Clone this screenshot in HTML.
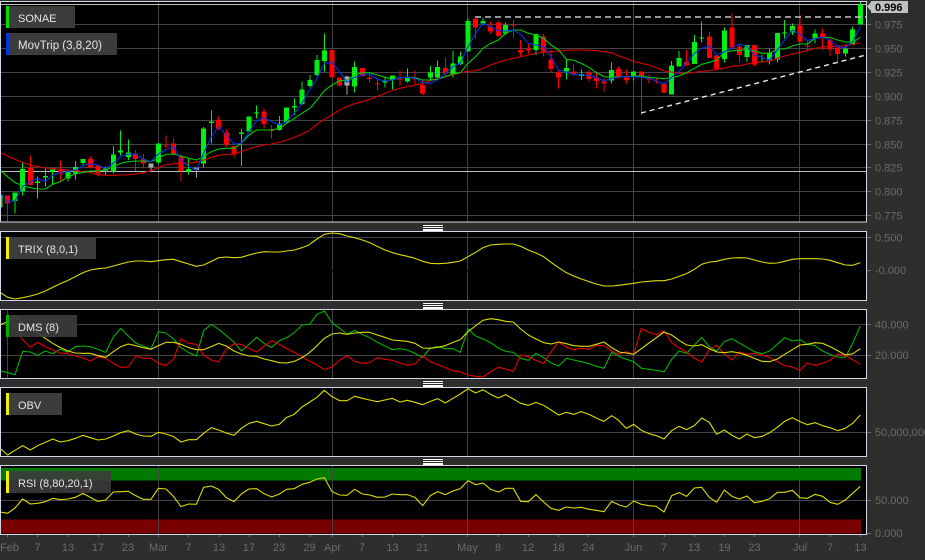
<!DOCTYPE html>
<html><head><meta charset="utf-8"><style>
html,body{margin:0;padding:0;background:#2e2e2e;width:925px;height:560px;overflow:hidden}
svg{display:block;position:absolute;left:0;top:0}
text{font-family:"Liberation Sans",sans-serif}
.ax{font-size:11px;fill:#6a6a6a}
.lb{font-size:11px;fill:#e4e4e4}
.gr{stroke:#444;stroke-width:1;fill:none;shape-rendering:crispEdges}
.w{fill:none;stroke-width:3;shape-rendering:crispEdges}
.b{fill:none;stroke-width:15;shape-rendering:crispEdges}
.l{fill:none;stroke-width:3.3;stroke-linejoin:round}
</style></head><body>
<svg width="925" height="560" viewBox="0 0 925 560">
<rect width="925" height="560" fill="#2e2e2e"/>
<!-- panels -->
<rect x="0" y="1" width="866" height="221" fill="#000"/>
<rect x="0" y="232" width="866" height="68" fill="#000"/>
<rect x="0" y="310" width="866" height="68" fill="#000"/>
<rect x="0" y="388" width="866" height="68" fill="#000"/>
<rect x="0" y="466" width="866" height="68" fill="#000"/>
<!-- RSI bands -->
<rect x="1" y="468" width="860" height="12.5" fill="#007a00"/>
<rect x="1" y="519.5" width="860" height="14" fill="#7a0000"/>
<!-- grid -->
<path class="gr" d="M0 24.5H866M0 48.5H866M0 72.5H866M0 96.5H866M0 120.5H866M0 144.5H866M0 167.5H866M0 191.5H866M0 215.5H866M0 237.5H866M0 324.5H866M0 355.5H866M0 432.5H866M0 500.5H866"/>
<path class="gr" d="M158.5 1V222M332.5 1V222M467.5 1V222M633.5 1V222M799.5 1V222M158.5 232V300M332.5 232V300M467.5 232V300M633.5 232V300M799.5 232V300M7.5 310V378M158.5 310V378M332.5 310V378M467.5 310V378M633.5 310V378M799.5 310V378M158.5 388V456M332.5 388V456M467.5 388V456M633.5 388V456M799.5 388V456M158.5 466V534M332.5 466V534M467.5 466V534M633.5 466V534M799.5 466V534"/>
<rect x="0" y="270" width="866" height="1.5" fill="#000"/>
<path d="M0 4.5H866M0 171.5H866" stroke="#bdbdbd" stroke-width="1" fill="none" shape-rendering="crispEdges"/>
<!-- candles 1 -->
<g transform="scale(.33333)">
<path class="w" stroke="#00ee11" d="M45 577V640M68 485V587M113 530V596M136 503V560M158 509V553M204 510V545M226 483V538M249 477V495M317 500V525M340 438V520M362 391V467M385 418V480M475 430V490M566 475V523M611 381V503M634 331V430M724 385V498M747 349V397M770 316V355M838 348V392M860 323V370M883 295V345M906 245V315"/>
<path class="b" stroke="#00ee11" d="M0 585V623M45 577V603M68 507V575M113 545V549M136 528V532M158 509V514M204 514V535M226 501V521M249 477V489M317 506V512M340 463V515M362 452V458M385 457V471M475 430V488M566 507V514M611 385V490M634 365V369M724 398V402M747 349V395M770 337V341M838 370V390M860 323V367M883 318V322M906 269V312"/>
<path class="w" stroke="#f00" d="M23 587V665M91 466V555M181 481V545M271 469V505M294 496V530M407 450V513M430 462V505M498 407V445M521 415V465M543 465V545M656 349V390M679 389V440M702 438V472M792 325V385M815 375V415"/>
<path class="b" stroke="#f00" d="M23 587V610M91 503V555M181 510V520M271 477V503M294 496V521M407 461V477M430 477V490M498 436V439M521 430V462M543 470V513M656 360V385M679 397V434M702 438V463M792 335V372M815 390V393"/>
<path class="w" stroke="#aaa" d="M453 491V510M589 503V533"/>
<path class="b" stroke="#aaa" d="M453 491V503M589 503V510"/>
<polyline class="l" stroke="#d80000" points="0,457 23,468 45,478 68,487 91,495 113,500 136,504 158,506 181,508 204,510 226,512 249,515 271,518 294,524 317,526 340,526 362,525 385,524 407,522 430,518 453,512 475,503 498,494 521,491 543,490 566,489 589,487 611,480 634,472 656,466 679,463 702,462 724,455 747,447 770,440 792,435 815,432 838,427 860,420 883,412 906,402 929,392"/>
<polyline class="l" stroke="#00cc00" points="0,510 23,530 45,548 68,557 91,563 113,567 136,567 158,553 181,545 204,530 226,522 249,517 271,513 294,513 317,510 340,500 362,490 385,485 407,483 430,483 453,485 475,475 498,463 521,462 543,468 566,475 589,480 611,470 634,455 656,447 679,445 702,445 724,430 747,405 770,390 792,390 815,390 838,385 860,370 883,355 906,340 929,325"/>
<polyline class="l" stroke="#0033e6" points="0,575 23,607 45,603 68,560 91,545 113,535 136,545 158,525 181,517 204,515 226,510 249,497 271,492 294,495 317,505 340,490 362,470 385,462 407,462 430,478 453,485 475,462 498,450 521,440 543,480 566,500 589,510 611,460 634,410 656,380 679,405 702,432 724,430 747,395 770,363 792,353 815,365 838,375 860,365 883,340 906,310 929,270"/>
</g>
<!-- candles 2 -->
<g transform="translate(310 0) scale(.33333)">
<path class="w" stroke="#00ee11" d="M0 225V262M21 165V228M43 100V215M134 184V277M225 229V263M247 227V268M292 206V247M361 198V240M383 181V240M429 152V232M451 155V195M474 55V155M519 52V75M587 68V105M678 100V165M769 178V238M814 208V240M905 187V250"/>
<path class="b" stroke="#00ee11" d="M0 240V258M21 180V225M43 152V183M134 201V260M225 243V247M247 227V240M292 232V245M361 217V232M383 201V232M429 190V222M451 169V192M474 63V155M519 63V71M587 75V100M678 102V150M769 204V214M814 222V228M905 210V242"/>
<path class="w" stroke="#f00" d="M66 150V232M89 232V260M157 204V230M179 220V248M202 235V270M270 212V256M315 212V254M338 240V285M406 172V232M497 55V115M542 65V100M565 65V110M610 60V112M632 120V168M655 130V160M701 102V170M723 150V217M746 210V265M791 190V228M837 210V245M859 215V265M882 235V275"/>
<path class="b" stroke="#f00" d="M66 150V232M89 232V257M157 204V228M179 232V237M202 250V254M270 235V238M315 236V239M338 255V280M406 204V220M497 55V82M542 80V95M565 67V108M610 74V77M632 150V157M655 147V152M701 110V155M723 178V207M746 217V232M791 215V222M837 217V237M859 232V243M882 245V250"/>
<path class="w" stroke="#aaa" d="M111 228V283"/>
<path class="b" stroke="#aaa" d="M111 230V257"/>
<polyline class="l" stroke="#d80000" points="0,390 21,373 43,358 66,345 89,330 111,320 134,311 157,305 179,298 202,290 225,280 247,272 270,265 292,260 315,255 338,250 361,243 383,235 406,230 429,224 451,218 474,214 497,212 519,205 542,195 565,187 587,180 610,175 632,170 655,165 678,160 701,157 723,155 746,153 769,151 791,150 814,150 837,151 859,152 882,155 905,158 928,168"/>
<polyline class="l" stroke="#00cc00" points="0,325 21,300 43,272 66,255 89,242 111,240 134,225 157,218 179,218 202,225 225,232 247,238 270,233 292,231 315,233 338,240 361,240 383,238 406,230 429,222 451,218 474,190 497,170 519,145 542,130 565,120 587,100 610,90 632,90 655,100 678,105 701,115 723,135 746,150 769,178 791,181 814,190 837,202 859,218 882,230 905,232 928,230"/>
<polyline class="l" stroke="#0033e6" points="0,270 21,235 43,190 66,187 89,215 111,247 134,232 157,225 179,222 202,238 225,243 247,240 270,233 292,232 315,235 338,248 361,250 383,240 406,220 429,200 451,190 474,140 497,100 519,70 542,80 565,92 587,93 610,90 632,103 655,130 678,135 701,140 723,170 746,210 769,216 791,224 814,224 837,226 859,232 882,243 905,235 928,232"/>
</g>
<!-- candles 3 -->
<g transform="translate(620 0) scale(.33333)">
<path class="w" stroke="#00ee11" d="M41 214V242M155 183V284M177 153V200M223 105V192M245 64V128M313 82V188M381 135V186M426 165V187M449 145V193M472 97V186M494 60V115M517 70V105M585 88V130M676 133V170M698 79V135M721 5V74"/>
<path class="b" stroke="#00ee11" d="M41 214V228M155 197V284M177 174V200M223 126V192M245 112V115M313 92V177M381 135V171M426 184V187M449 158V182M472 99V178M494 97V100M517 78V97M585 100V115M676 145V160M698 89V135M721 13V74"/>
<path class="w" stroke="#f00" d="M-4 200V235M19 208V250M64 214V345M87 224V250M109 235V250M132 250V280M200 150V198M268 95V174M290 167V212M336 40V143M358 130V187M403 135V199M540 45V128M562 120V155M608 85V150M630 115V168M653 143V190"/>
<path class="b" stroke="#f00" d="M-4 207V228M19 232V240M64 214V228M87 232V238M109 243V245M132 250V277M200 186V196M268 109V174M290 167V206M336 83V143M358 140V165M403 135V193M540 77V124M562 137V140M608 101V113M630 119V148M653 143V162"/>
<polyline class="l" stroke="#d80000" points="-4,168 19,175 41,185 64,190 87,195 109,203 132,213 155,216 177,220 200,220 223,217 245,214 268,212 290,208 313,205 336,199 358,197 381,192 403,188 426,186 449,183 472,175 494,168 517,162 540,157 562,152 585,145 608,140 630,140 653,138 676,137 698,133 721,129"/>
<polyline class="l" stroke="#00cc00" points="-4,230 19,230 41,228 64,228 87,232 109,234 132,236 155,233 177,228 200,218 223,205 245,193 268,187 290,180 313,157 336,152 358,152 381,147 403,153 426,160 449,160 472,147 494,147 517,138 540,132 562,132 585,115 608,112 630,112 653,120 676,126 698,127 721,112"/>
<polyline class="l" stroke="#0033e6" points="-4,230 19,230 41,230 64,232 87,235 109,243 132,252 155,232 177,215 200,190 223,160 245,145 268,138 290,165 313,155 336,145 358,132 381,140 403,165 426,172 449,180 472,150 494,120 517,90 540,103 562,122 585,115 608,112 630,120 653,140 676,143 698,125 721,80"/>
</g>
<!-- trend lines -->
<path d="M475 17H866" stroke="#c4c4c4" stroke-width="1.6" stroke-dasharray="6 4" fill="none"/>
<path d="M641 113L866 55" stroke="#e8e8e8" stroke-width="1.4" stroke-dasharray="5 4" fill="none"/>
<!-- indicators -->
<g transform="translate(0 225) scale(.33333)">
<polyline class="l" stroke="#dcdc00" points="0,202 23,217 45,222 68,218 91,213 113,207 136,198 158,187 181,176 204,166 226,155 249,143 271,135 294,131 317,129 340,123 362,117 385,111 407,108 430,108 453,110 475,107 498,104 521,103 543,110 566,117 589,124 611,120 634,109 656,98 679,96 702,98 724,97 747,90 770,84 792,80 815,81 838,81 860,78 883,75 906,68 930,59"/>
<polyline class="l" stroke="#00b400" points="0,437 23,443 45,449 68,379 91,381 113,391 136,378 158,386 181,373 204,381 226,365 249,363 271,365 294,373 317,382 340,336 362,310 385,333 407,354 430,363 453,372 475,320 498,324 521,342 543,368 566,383 589,393 611,317 634,298 656,313 679,332 702,351 724,378 747,358 770,337 792,355 815,367 838,347 860,338 883,323 906,300 930,298"/>
<polyline class="l" stroke="#e60000" points="0,300 23,290 45,305 68,345 91,366 113,352 136,365 158,375 181,385 204,385 226,393 249,399 271,408 294,395 317,400 340,415 362,427 385,426 407,393 430,400 453,400 475,415 498,421 521,402 543,341 566,355 589,358 611,390 634,405 656,411 679,372 702,357 724,358 747,370 770,381 792,364 815,347 838,358 860,370 883,382 906,395 930,410"/>
<polyline class="l" stroke="#dcdc00" points="0,300 23,290 45,273 68,292 91,310 113,325 136,340 158,355 181,368 204,378 226,384 249,385 271,385 294,392 317,397 340,380 362,365 385,357 407,362 430,368 453,373 475,362 498,352 521,352 543,358 566,368 589,374 611,374 634,365 656,355 679,363 702,378 724,387 747,393 770,394 792,402 815,407 838,413 860,414 883,409 906,398 930,382"/>
</g>
<g transform="translate(310 225) scale(.33333)">
<polyline class="l" stroke="#dcdc00" points="-1,58 21,42 43,28 66,24 89,26 111,33 134,38 157,45 179,53 202,64 225,75 247,83 270,89 292,94 315,100 338,109 361,115 383,116 406,115 429,112 451,108 474,95 497,82 519,68 542,60 565,58 587,57 610,57 632,64 655,75 678,84 701,95 723,112 746,128 769,143 791,153 814,162 837,170 859,177 882,183 905,183 928,181"/>
<polyline class="l" stroke="#00b400" points="-1,298 21,268 43,258 66,293 89,310 111,327 134,316 157,328 179,338 202,352 225,363 247,374 270,371 292,375 315,385 338,397 361,369 383,365 406,371 429,371 451,382 474,312 497,333 519,342 542,353 565,369 587,379 610,382 632,400 655,406 678,385 701,398 723,414 746,423 769,400 791,405 814,410 837,416 859,424 882,430 905,382 928,394"/>
<polyline class="l" stroke="#e60000" points="-1,408 21,420 43,434 66,426 89,405 111,393 134,409 157,415 179,413 202,398 225,403 247,406 270,414 292,421 315,417 338,393 361,410 383,419 406,428 429,437 451,441 474,450 497,454 519,456 542,440 565,427 587,432 610,439 632,390 655,395 678,406 701,416 723,380 746,351 769,367 791,374 814,370 837,373 859,361 882,362 905,378 928,388"/>
<polyline class="l" stroke="#dcdc00" points="-1,382 21,362 43,340 66,327 89,324 111,328 134,324 157,322 179,322 202,330 225,337 247,345 270,347 292,349 315,355 338,369 361,370 383,367 406,362 429,352 451,344 474,320 497,302 519,286 542,281 565,284 587,289 610,291 632,312 655,330 678,342 701,353 723,357 746,351 769,356 791,362 814,364 837,364 859,358 882,351 905,368 928,381"/>
</g>
<g transform="translate(620 225) scale(.33333)">
<polyline class="l" stroke="#dcdc00" points="-4,181 19,178 41,175 64,171 87,169 109,167 132,167 155,162 177,154 200,146 223,133 245,118 268,111 290,109 313,103 336,99 358,98 381,99 403,105 426,111 449,115 472,114 494,109 517,103 540,101 562,101 585,101 608,102 630,106 653,113 676,120 698,121 721,113"/>
<polyline class="l" stroke="#00b400" points="-4,394 19,403 41,410 64,430 87,433 109,436 132,441 155,403 177,378 200,385 223,360 245,337 268,365 290,378 313,350 336,341 358,354 381,367 403,380 426,386 449,378 472,358 494,338 517,348 540,344 562,358 585,362 608,378 630,388 653,396 676,397 698,355 721,303"/>
<polyline class="l" stroke="#e60000" points="-4,388 19,380 41,388 64,310 87,322 109,329 132,318 155,353 177,368 200,381 223,400 245,411 268,374 290,361 313,387 336,405 358,381 381,388 403,385 426,390 449,398 472,410 494,422 517,426 540,436 562,414 585,421 608,415 630,406 653,387 676,392 698,404 721,418"/>
<polyline class="l" stroke="#dcdc00" points="-4,381 19,384 41,388 64,371 87,354 109,338 132,321 155,330 177,346 200,360 223,363 245,359 268,371 290,381 313,383 336,380 358,384 381,391 403,400 426,409 449,410 472,402 494,388 517,374 540,360 562,358 585,353 608,355 630,365 653,377 676,390 698,386 721,371"/>
</g>
<g transform="translate(0 380) scale(.33333)">
<polyline class="l" stroke="#dcdc00" points="0,205 23,225 45,211 68,197 91,210 113,197 136,187 158,177 181,186 204,182 226,175 249,166 271,173 294,180 317,177 340,168 362,158 385,152 407,162 430,168 453,169 475,157 498,162 521,170 543,186 566,179 589,179 611,160 634,143 656,150 679,159 702,166 724,145 747,130 770,124 792,131 815,138 838,133 860,112 883,103 906,81 930,66"/>
<polyline class="l" stroke="#dcdc00" points="0,396 23,400 45,384 68,357 91,372 113,370 136,365 158,355 181,359 204,357 226,352 249,340 271,352 294,364 317,360 340,336 362,335 385,334 407,347 430,358 453,358 475,325 498,327 521,350 543,380 566,372 589,373 611,322 634,318 656,328 679,353 702,365 724,342 747,327 770,326 792,341 815,351 838,342 860,328 883,326 906,313 930,307"/>
</g>
<g transform="translate(310 380) scale(.33333)">
<polyline class="l" stroke="#dcdc00" points="-1,66 21,52 43,31 66,50 89,62 111,62 134,49 157,55 179,60 202,65 225,60 247,55 270,66 292,61 315,67 338,74 361,64 383,56 406,69 429,55 451,42 474,26 497,39 519,29 542,43 565,54 587,44 610,57 632,70 655,76 678,67 701,76 723,90 746,105 769,97 791,103 814,95 837,103 859,114 882,124 905,107 928,122"/>
<polyline class="l" stroke="#dcdc00" points="-1,307 21,297 43,293 66,335 89,345 111,346 134,328 157,342 179,345 202,352 225,351 247,342 270,344 292,344 315,352 338,377 361,347 383,335 406,344 429,333 451,326 474,302 497,314 519,309 542,328 565,336 587,325 610,325 632,364 655,365 678,344 701,366 723,385 746,391 769,381 791,384 814,382 837,388 859,391 882,395 905,364 928,375"/>
</g>
<g transform="translate(620 380) scale(.33333)">
<polyline class="l" stroke="#dcdc00" points="-4,122 19,145 41,133 64,151 87,161 109,167 132,177 155,152 177,139 200,149 223,137 245,114 268,127 290,163 313,150 336,166 358,177 381,162 403,173 426,169 449,158 472,142 494,124 517,113 540,125 562,134 585,128 608,137 630,143 653,152 676,145 698,130 721,105"/>
<polyline class="l" stroke="#dcdc00" points="-4,375 19,381 41,363 64,373 87,377 109,379 132,396 155,347 177,338 200,349 223,324 245,322 268,352 290,367 313,330 336,349 358,357 381,348 403,368 426,364 449,356 472,337 494,337 517,331 540,353 562,355 585,343 608,349 630,367 653,373 676,360 698,340 721,319"/>
</g>
<!-- frames -->
<g fill="none" stroke="#d0d8e8" stroke-width="1" shape-rendering="crispEdges">
<rect x="0.5" y="1.5" width="866" height="220.5"/>
<rect x="0.5" y="231.5" width="866" height="69"/>
<rect x="0.5" y="309.5" width="866" height="69"/>
<rect x="0.5" y="387.5" width="866" height="69"/>
<rect x="0.5" y="465.5" width="866" height="69"/>
</g>
<!-- splitters -->
<g fill="#fff" shape-rendering="crispEdges">
<rect x="423" y="225" width="20" height="1"/><rect x="423" y="227" width="20" height="1"/><rect x="423" y="229" width="20" height="2"/>
<rect x="423" y="303" width="20" height="1"/><rect x="423" y="305" width="20" height="1"/><rect x="423" y="307" width="20" height="2"/>
<rect x="423" y="381" width="20" height="1"/><rect x="423" y="383" width="20" height="1"/><rect x="423" y="385" width="20" height="2"/>
<rect x="423" y="459" width="20" height="1"/><rect x="423" y="461" width="20" height="1"/><rect x="423" y="463" width="20" height="2"/>
</g>
<!-- legends -->
<rect x="9" y="6" width="66" height="22" fill="#3c3c3c"/><rect x="6" y="6" width="3" height="22" fill="#00e000"/>
<text class="lb" x="18" y="22">SONAE</text>
<rect x="9" y="33" width="108" height="22" fill="#3c3c3c"/><rect x="6" y="33" width="3" height="22" fill="#0033e6"/>
<text class="lb" x="18" y="49" style="font-size:11.5px">MovTrip (3,8,20)</text>
<rect x="9" y="237" width="87" height="22" fill="#3c3c3c"/><rect x="6" y="237" width="3" height="22" fill="#f0f000"/>
<text class="lb" x="18" y="253">TRIX (8,0,1)</text>
<rect x="9" y="315" width="68" height="22" fill="#3c3c3c" fill-opacity=".92"/><rect x="6" y="315" width="3" height="22" fill="#00b400"/>
<text class="lb" x="18" y="331">DMS (8)</text>
<rect x="9" y="393" width="53" height="22" fill="#3c3c3c"/><rect x="6" y="393" width="3" height="22" fill="#f0f000"/>
<text class="lb" x="18" y="409">OBV</text>
<rect x="9" y="471" width="102" height="22" fill="#3c3c3c" fill-opacity=".9"/><rect x="6" y="471" width="3" height="22" fill="#f0f000"/>
<text class="lb" x="18" y="487">RSI (8,80,20,1)</text>
<!-- right ticks -->
<path d="M867 24.5H871M867 48.5H871M867 72.5H871M867 96.5H871M867 120.5H871M867 144.5H871M867 167.5H871M867 191.5H871M867 215.5H871M867 237.5H871M867 270.5H871M867 324.5H871M867 355.5H871M867 432.5H871M867 500.5H871M867 533.5H871" stroke="#6c6c6c" fill="none" shape-rendering="crispEdges"/>
<!-- price flag -->
<path d="M867 6.5L871 2V1H908V13H871V11Z" fill="#c0c0c0"/>
<text x="875" y="11" font-size="11" font-weight="700" fill="#000">0.996</text>
<!-- right axis -->
<g class="ax">
<text x="875" y="28.5">0.975</text><text x="875" y="52.5">0.950</text><text x="875" y="76.5">0.925</text><text x="875" y="100.5">0.900</text><text x="875" y="124.5">0.875</text><text x="875" y="148.5">0.850</text><text x="875" y="171.5">0.825</text><text x="875" y="195.5">0.800</text><text x="875" y="219.5">0.775</text>
<text x="875" y="241.5">0.500</text><text x="875" y="274">-0.000</text>
<text x="875" y="328.5">40.000</text><text x="875" y="359">20.000</text>
<text x="875" y="436">50,000,000</text>
<text x="875" y="504">50.000</text><text x="875" y="537">0.000</text>
</g>
<!-- bottom ticks -->
<path d="M7.5 535V537M37.5 535V537M68.5 535V537M98.5 535V537M128.5 535V537M158.5 535V537M188.5 535V537M219.5 535V537M249.5 535V537M279.5 535V537M310.5 535V537M332.5 535V537M362.5 535V537M392.5 535V537M422.5 535V537M467.5 535V537M498.5 535V537M528.5 535V537M558.5 535V537M588.5 535V537M633.5 535V537M664.5 535V537M694.5 535V537M724.5 535V537M754.5 535V537M799.5 535V537M830.5 535V537M860.5 535V537" stroke="#6c6c6c" fill="none" shape-rendering="crispEdges"/>
<g class="ax" text-anchor="middle">
<text x="9.5" y="551">Feb</text><text x="37.5" y="551">7</text><text x="68" y="551">13</text><text x="98" y="551">17</text><text x="128" y="551">23</text><text x="158.5" y="551">Mar</text><text x="188.5" y="551">7</text><text x="219" y="551">13</text><text x="249" y="551">17</text><text x="279" y="551">23</text><text x="309.5" y="551">29</text><text x="332.5" y="551">Apr</text><text x="362" y="551">7</text><text x="392.5" y="551">13</text><text x="422.5" y="551">21</text><text x="467.5" y="551">May</text><text x="498" y="551">8</text><text x="528" y="551">12</text><text x="558.5" y="551">18</text><text x="588.5" y="551">24</text><text x="633.5" y="551">Jun</text><text x="664" y="551">7</text><text x="694" y="551">13</text><text x="724.5" y="551">19</text><text x="754.5" y="551">23</text><text x="800" y="551">Jul</text><text x="830" y="551">7</text><text x="860.5" y="551">13</text>
</g>
</svg>
</body></html>
